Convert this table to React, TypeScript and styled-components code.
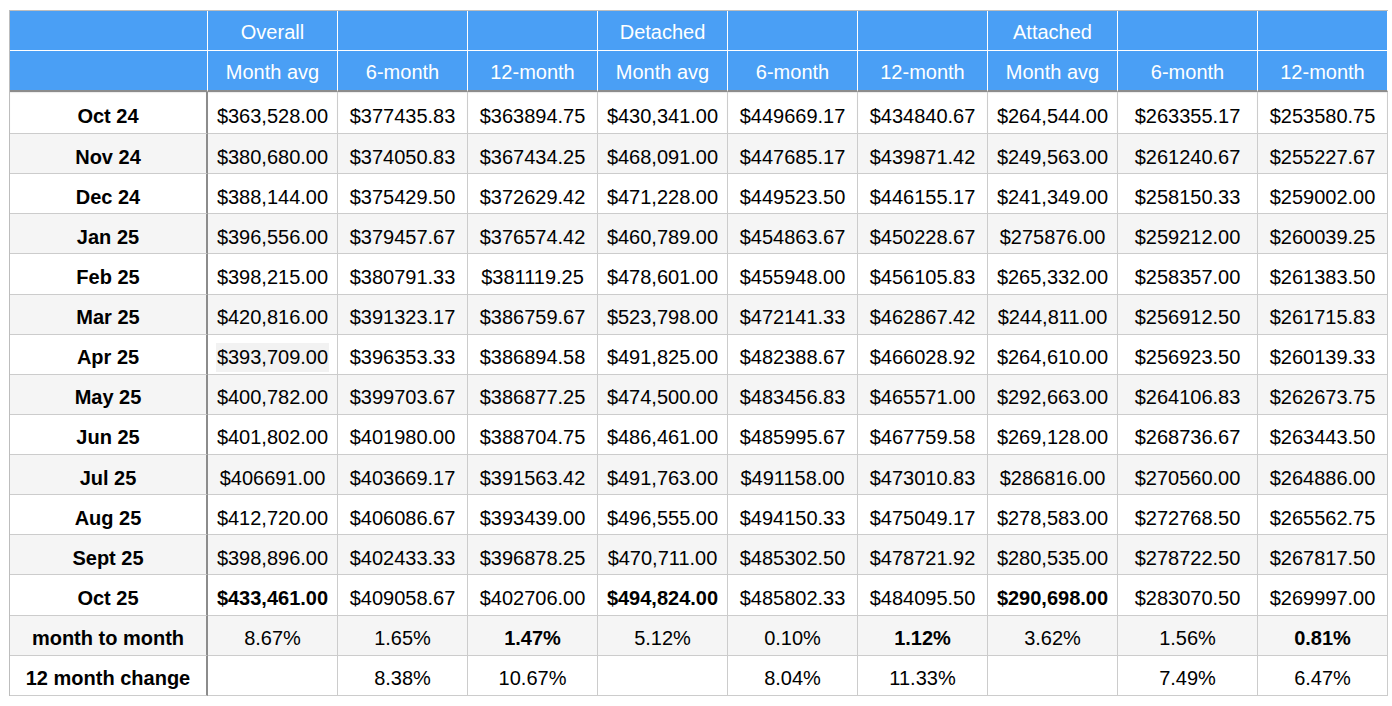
import React from "react";
import styled, { createGlobalStyle, css } from "styled-components";

const GlobalStyle = createGlobalStyle`
  body {
    margin: 0;
    background: #ffffff;
    font-family: "Liberation Sans", Arial, Helvetica, sans-serif;
  }
`;

const Sheet = styled.div`
  display: grid;
  grid-template-columns: 198px repeat(7, 130px) 140px 130px;
  grid-template-rows: 40px 41px 42px;
  grid-auto-rows: 40.14px;
  width: max-content;
  margin: 10px 0 0 9px;
  border-top: 1px solid #bdbdbd;
  border-left: 1px solid #bdbdbd;
`;

const cellBase = css`
  box-sizing: border-box;
  display: flex;
  align-items: center;
  justify-content: center;
  font-size: 20px;
  white-space: nowrap;
`;

const HeadCell = styled.div<{ $bottom?: boolean }>`
  ${cellBase}
  padding-top: 4px;
  background: #4a9ff5;
  color: #ffffff;
  border-right: 1px solid #ffffff;
  border-bottom: ${(p) => (p.$bottom ? "2px solid #8c8c8c" : "1px solid #ffffff")};
`;

const BodyCell = styled.div<{
  $stripe?: boolean;
  $first?: boolean;
  $bold?: boolean;
  $top?: boolean;
}>`
  ${cellBase}
  padding-top: 7px;
  background: ${(p) => (p.$stripe ? "#f5f5f5" : "#ffffff")};
  color: #000000;
  font-weight: ${(p) => (p.$bold || p.$first ? 700 : 400)};
  border-right: ${(p) => (p.$first ? "2px solid #8c8c8c" : "1px solid #cccccc")};
  border-bottom: 1px solid #cccccc;
  ${(p) =>
    p.$top &&
    css`
      box-shadow: inset 0 1px 1px rgba(0, 0, 0, 0.08);
    `}
`;

const Marked = styled.span`
  background: #f2f2f2;
  padding: 3px 1px;
`;

const groupRow = ["", "Overall", "", "", "Detached", "", "", "Attached", "", ""];
const labelRow = [
  "",
  "Month avg",
  "6-month",
  "12-month",
  "Month avg",
  "6-month",
  "12-month",
  "Month avg",
  "6-month",
  "12-month",
];

// "*" marks a bold value, "~" a value with the light selection behind it
const rows: string[][] = [
  ["Oct 24", "$363,528.00", "$377435.83", "$363894.75", "$430,341.00", "$449669.17", "$434840.67", "$264,544.00", "$263355.17", "$253580.75"],
  ["Nov 24", "$380,680.00", "$374050.83", "$367434.25", "$468,091.00", "$447685.17", "$439871.42", "$249,563.00", "$261240.67", "$255227.67"],
  ["Dec 24", "$388,144.00", "$375429.50", "$372629.42", "$471,228.00", "$449523.50", "$446155.17", "$241,349.00", "$258150.33", "$259002.00"],
  ["Jan 25", "$396,556.00", "$379457.67", "$376574.42", "$460,789.00", "$454863.67", "$450228.67", "$275876.00", "$259212.00", "$260039.25"],
  ["Feb 25", "$398,215.00", "$380791.33", "$381119.25", "$478,601.00", "$455948.00", "$456105.83", "$265,332.00", "$258357.00", "$261383.50"],
  ["Mar 25", "$420,816.00", "$391323.17", "$386759.67", "$523,798.00", "$472141.33", "$462867.42", "$244,811.00", "$256912.50", "$261715.83"],
  ["Apr 25", "~$393,709.00", "$396353.33", "$386894.58", "$491,825.00", "$482388.67", "$466028.92", "$264,610.00", "$256923.50", "$260139.33"],
  ["May 25", "$400,782.00", "$399703.67", "$386877.25", "$474,500.00", "$483456.83", "$465571.00", "$292,663.00", "$264106.83", "$262673.75"],
  ["Jun 25", "$401,802.00", "$401980.00", "$388704.75", "$486,461.00", "$485995.67", "$467759.58", "$269,128.00", "$268736.67", "$263443.50"],
  ["Jul 25", "$406691.00", "$403669.17", "$391563.42", "$491,763.00", "$491158.00", "$473010.83", "$286816.00", "$270560.00", "$264886.00"],
  ["Aug 25", "$412,720.00", "$406086.67", "$393439.00", "$496,555.00", "$494150.33", "$475049.17", "$278,583.00", "$272768.50", "$265562.75"],
  ["Sept 25", "$398,896.00", "$402433.33", "$396878.25", "$470,711.00", "$485302.50", "$478721.92", "$280,535.00", "$278722.50", "$267817.50"],
  ["Oct 25", "*$433,461.00", "$409058.67", "$402706.00", "*$494,824.00", "$485802.33", "$484095.50", "*$290,698.00", "$283070.50", "$269997.00"],
  ["month to month", "8.67%", "1.65%", "*1.47%", "5.12%", "0.10%", "*1.12%", "3.62%", "1.56%", "*0.81%"],
  ["12 month change", "", "8.38%", "10.67%", "", "8.04%", "11.33%", "", "7.49%", "6.47%"],
];

const App = () => {
  return (
    <>
      <GlobalStyle />
      <Sheet>
        {groupRow.map((text, i) => (
          <HeadCell key={`g${i}`}>{text}</HeadCell>
        ))}
        {labelRow.map((text, i) => (
          <HeadCell key={`l${i}`} $bottom>
            {text}
          </HeadCell>
        ))}
        {rows.map((row, r) =>
          row.map((value, c) => {
            const bold = value.startsWith("*");
            const marked = value.startsWith("~");
            const text = bold || marked ? value.slice(1) : value;
            return (
              <BodyCell
                key={`${r}-${c}`}
                $stripe={r % 2 === 1}
                $first={c === 0}
                $bold={bold}
                $top={r === 0}
              >
                {marked ? <Marked>{text}</Marked> : text}
              </BodyCell>
            );
          })
        )}
      </Sheet>
    </>
  );
};

export default App;
